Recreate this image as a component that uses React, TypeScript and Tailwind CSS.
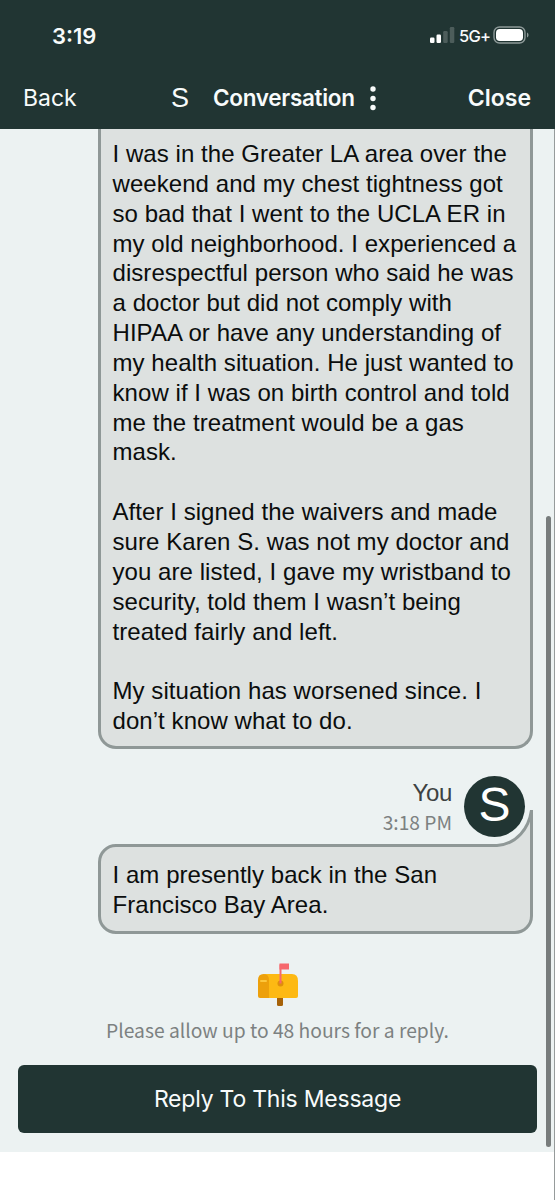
const firstMessage = [
  [
    "I was in the Greater LA area over the",
    "weekend and my chest tightness got",
    "so bad that I went to the UCLA ER in",
    "my old neighborhood. I experienced a",
    "disrespectful person who said he was",
    "a doctor but did not comply with",
    "HIPAA or have any understanding of",
    "my health situation. He just wanted to",
    "know if I was on birth control and told",
    "me the treatment would be a gas",
    "mask.",
  ],
  [
    "After I signed the waivers and made",
    "sure Karen S. was not my doctor and",
    "you are listed, I gave my wristband to",
    "security, told them I wasn’t being",
    "treated fairly and left.",
  ],
  ["My situation has worsened since. I", "don’t know what to do."],
]

const secondMessage = [["I am presently back in the San", "Francisco Bay Area."]]

function Message({ paragraphs }: { paragraphs: string[][] }) {
  return (
    <div className="flex flex-col gap-[29.85px] font-['Liberation_Sans',sans-serif] text-[24px] leading-[29.85px] tracking-[0.06px] text-[#0b0d0d]">
      {paragraphs.map((lines) => (
        <p key={lines[0]}>
          {lines.map((line) => (
            <span key={line} className="block whitespace-nowrap">
              {line}
            </span>
          ))}
        </p>
      ))}
    </div>
  )
}

function StatusIcons() {
  return (
    <div className="flex items-center">
      <svg width="25" height="17" viewBox="0 0 25 17" fill="#fff">
        <rect x="0" y="10.5" width="4.5" height="5.5" rx="1.2" />
        <rect x="6.5" y="7.5" width="4.5" height="8.5" rx="1.2" />
        <rect x="13.2" y="4" width="4.5" height="12" rx="1.2" opacity="0.2" />
        <rect x="19.8" y="0" width="4.5" height="16" rx="1.2" opacity="0.2" />
      </svg>
      <span className="ml-1 mt-0.5 w-[31px] whitespace-nowrap text-[16.5px] font-medium leading-5 tracking-[-0.8px]">5G+</span>
      <svg className="ml-[3px]" width="37" height="18" viewBox="0 0 37 18" fill="none">
        <rect x="1" y="1" width="31" height="16" rx="5.5" stroke="#8d9998" strokeWidth="1.4" />
        <rect x="3" y="3" width="27" height="12" rx="3.8" fill="#fff" />
        <path d="M34 6.5c2 .8 2 4.2 0 5z" fill="#8d9998" />
      </svg>
    </div>
  )
}

function Mailbox() {
  return (
    <svg width="42" height="44" viewBox="0 0 42 44">
      <rect x="20" y="32" width="6" height="11" rx="1.5" fill="#a66208" />
      <path d="M7 11h28q6 0 6 7v15q0 2-2 2H10z" fill="#fdb913" />
      <path d="M1 17q0-6 5.5-6T12 17v18H3q-2 0-2-2z" fill="#eda00b" />
      <rect x="3" y="17" width="7" height="2" rx="1" fill="#fdc73c" />
      <circle cx="23.5" cy="20.5" r="3" fill="#df8e0b" />
      <path d="M23.5 20.5V1.5" stroke="#f6686d" strokeWidth="2" />
      <path d="M22.5.5h9.5v6h-9.5z" fill="#f6686d" />
    </svg>
  )
}

export default function App() {
  return (
    <div className="relative flex h-[1200px] w-[555px] flex-col overflow-hidden bg-white font-['Inter',sans-serif]">
      <header className="h-[129px] shrink-0 bg-[#213533] text-[#f8fbfb]">
        <div className="flex h-[70px] items-center justify-between pl-[52px] pr-[25px]">
          <span className="pt-px text-[22px] font-semibold leading-7">3:19</span>
          <StatusIcons />
        </div>
        <div className="flex h-14 items-center text-[23px] leading-7">
          <span className="ml-[23px] w-[148px]">Back</span>
          <span className="w-[42px] font-['Liberation_Sans',sans-serif] text-[27px]">S</span>
          <span className="w-[156px] whitespace-nowrap text-[22.5px] font-semibold tracking-[-0.3px]">Conversation</span>
          <svg width="8" height="26" viewBox="0 0 8 26" fill="currentColor">
            <circle cx="4" cy="4" r="2.7" />
            <circle cx="4" cy="13.5" r="2.7" />
            <circle cx="4" cy="22.5" r="2.7" />
          </svg>
          <span className="ml-auto mr-6 font-semibold">Close</span>
        </div>
      </header>

      <main className="flex h-[1023px] shrink-0 flex-col bg-[#ecf2f2]">
        <div className="ml-[98px] h-[620px] w-[435px] rounded-b-[18px] border-[3px] border-t-0 border-[#8f9897] bg-[#dde1e0] pl-[11.5px] pt-[10px]">
          <Message paragraphs={firstMessage} />
        </div>

        {/* Sender */}
        <div className="mt-[27px] flex h-[61px] items-start justify-end pr-[30px]">
          <div className="mr-[12px] pt-px text-right">
            <div className="font-['Liberation_Sans',sans-serif] text-[24px] leading-8 tracking-[-0.3px] text-[#3d4242]">You</div>
            <div className="font-['Noto_Sans_CJK_SC',sans-serif] text-[19.2px] leading-[27px] text-[#7c8181]">3:18 PM</div>
          </div>
          <div className="flex size-[61px] items-center justify-center rounded-full bg-[#213533] pb-[3px] font-['Liberation_Sans',sans-serif] text-[48px] leading-none text-white">
            S
          </div>
        </div>

        <div className="relative ml-[98px] mt-[7px] h-[90px] w-[435px] rounded-[18px] rounded-tr-none border-[3px] border-[#8f9897] bg-[#dde1e0] pl-[11.5px] pt-[13px]">
          <Message paragraphs={secondMessage} />
          {/* Curved tail under the avatar */}
          <svg className="absolute -right-[3px] -top-[37px]" width="40" height="42" viewBox="0 0 40 42" fill="none">
            <path d="M0 35.5H4C24 34 36 18 38.5 0V42H0z" fill="#dde1e0" />
            <path d="M0 35.5H4C24 34 36 18 38.5 0V42" stroke="#8f9897" strokeWidth="3" />
          </svg>
        </div>

        <div className="mt-[29px] flex flex-col items-center">
          <Mailbox />
          <p className="mt-[9px] font-['Noto_Sans_CJK_SC',sans-serif] text-[19.25px] leading-7 text-[#7c8181]">
            Please allow up to 48 hours for a reply.
          </p>
        </div>

        <button className="mx-[18px] mt-auto mb-[19px] h-[68px] rounded-md bg-[#213533] text-[23px] tracking-[-0.22px] text-[#f8fbfb]">
          Reply To This Message
        </button>
      </main>

      {/* Scroll thumb and screen edge */}
      <div className="absolute left-[546px] top-[516px] h-[631px] w-[5px] rounded-full bg-[#777c7c]" />
      <div className="absolute right-0 top-[129px] h-[1071px] w-px bg-[#969b9b]" />
    </div>
  )
}
